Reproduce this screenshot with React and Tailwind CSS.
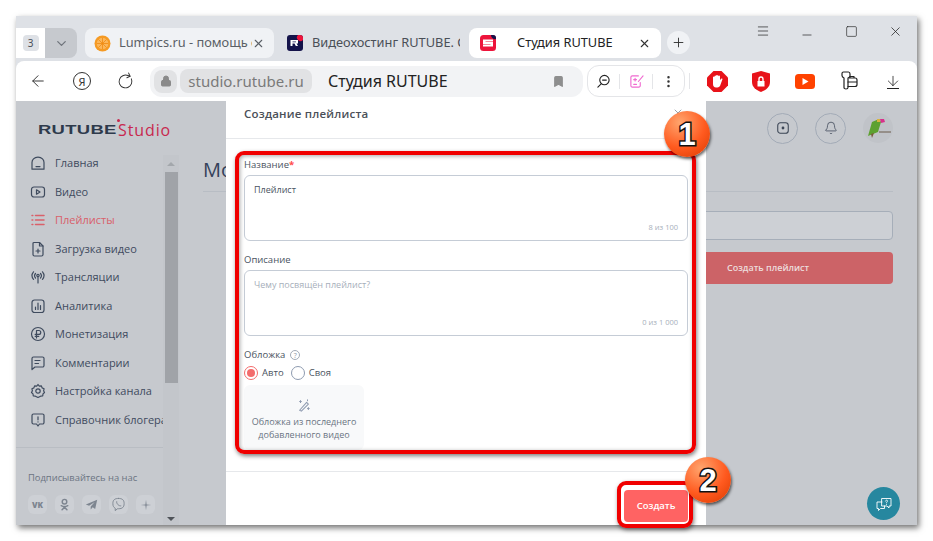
import { X, Plus, ChevronDown, ArrowLeft, RotateCw, Lock, Bookmark, Minus, Square, Menu, EllipsisVertical, ArrowDown, Bell } from 'lucide-react';

const Ico = ({ children, size = 16, className = '', vb = 16, sw = 1.2 }) => (
  <svg width={size} height={size} viewBox={`0 0 ${vb} ${vb}`} fill="none" stroke="currentColor" strokeWidth={sw} strokeLinecap="round" strokeLinejoin="round" className={className}>
    {children}
  </svg>
);

const navItems = [
  { label: 'Главная', icon: <><path d="M2 14.2V7.5C2 5 4 2.200 8 2.200s6 2.800 6 5.300v6.700z" /><path d="M6 11.600h4" /></> },
  { label: 'Видео', icon: <><rect x="1.500" y="3" width="13" height="10" rx="2.500" /><path d="M6.500 5.800v4.400L10 8z" /></> },
  { label: 'Плейлисты', active: true, icon: <path d="M2 3.500h.8M2 8h.8M2 12.500h.8M5.500 3.500H14M5.500 8H14M5.500 12.500H14" strokeWidth="1.500" /> },
  { label: 'Загрузка видео', icon: <><path d="M3 2.500a1 1 0 0 1 1-1h5.500L13 5v8.500a1.500 1.500 0 0 1-1.500 1.500h-7A1.500 1.500 0 0 1 3 13.500z" /><path d="M9.500 1.500V5H13M8 8v4M6 10h4" /></> },
  { label: 'Трансляции', icon: <><circle cx="8" cy="6.500" r="1.200" /><path d="M8 8v6M5.500 4.500a3.500 3.500 0 0 0 0 4.500M10.500 4.500a3.500 3.500 0 0 1 0 4.500M3.500 2.800a6 6 0 0 0 0 7.600M12.500 2.800a6 6 0 0 1 0 7.600" /></> },
  { label: 'Аналитика', icon: <><rect x="2" y="2" width="12" height="12.500" rx="2.500" /><path d="M5.500 11.500V9M8 11.500V5M10.500 11.500V7.500" /></> },
  { label: 'Монетизация', icon: <><circle cx="8" cy="8" r="6.500" /><path d="M6.500 12V4.500h2.300a1.900 1.900 0 0 1 0 3.900H5.200M5.200 10.300h3.600" /></> },
  { label: 'Комментарии', icon: <><path d="M2 3.500A1.500 1.500 0 0 1 3.500 2h9A1.500 1.500 0 0 1 14 3.500v7a1.500 1.500 0 0 1-1.500 1.500H5l-3 2.500z" /><path d="M5 5.500h5M5 8.500h3.500" /></> },
  { label: 'Настройка канала', icon: <><path d="M8 1.500l1.300 1.700 2.100-.3.700 2 2 .8-.5 2.100.9 1.700-1.500 1.400-.3 2.100-2.100.2L8 14.500l-2.600-1.300-2.100-.2-.3-2.100L1.500 9.500l.9-1.700-.5-2.100 2-.8.700-2 2.100.3z" /><circle cx="8" cy="8" r="2.200" /></> },
  { label: 'Справочник блогера', icon: <><path d="M3.500 2h9A1.500 1.500 0 0 1 14 3.500v7a1.500 1.500 0 0 1-1.500 1.500H9.500L8 14l-1.500-2h-3A1.500 1.500 0 0 1 2 10.500v-7A1.500 1.500 0 0 1 3.500 2z" /><path d="M8 4.800v3M8 9.800v.1" /></> },
];

const socials = [
  <span key="vk" className="text-[8px] font-black text-[#7d8590]">VK</span>,
  <Ico key="ok" size={13} sw={1.800} className="text-[#7d8590]"><circle cx="8" cy="4.500" r="2.800" /><path d="M4 9.500c2.500 1.500 5.500 1.500 8 0M8 10.500v1M5 14.500l3-3 3 3" /></Ico>,
  <svg key="tg" width="13" height="13" viewBox="0 0 16 16" className="text-[#7d8590]" fill="currentColor"><path d="M15 2 1 8l4 1.500L12 5 7 10.500V14l2.500-2.500 3 2z" /></svg>,
  <Ico key="vb" size={15} sw={1} className="text-[#7d8590]"><path d="M8 1.500c4 0 6 1.500 6 5.500s-2 5.500-6 5.500H7L4.500 14.500V12C3 11 2 10 2 7c0-4 2-5.500 6-5.500z" /><path d="M6 5c-.500 2 2.500 5 4.500 4.500" /></Ico>,
  <svg key="st" width="12" height="12" viewBox="0 0 16 16" className="text-[#7d8590]" fill="currentColor"><path d="M8 1l.8 6.200L15 8l-6.200.8L8 15l-.8-6.200L1 8l6.200-.8z" /></svg>,
];

const Sidebar = () => (
  <aside className="flex w-[187px] shrink-0 bg-[#c6c9ce]">
    <div className="flex w-[147px] flex-col">
      <div className="flex h-[48px] items-start pt-[20px] pl-[22px]">
        <span className="inline-block w-[80px] shrink-0 origin-left scale-x-[1.42] text-[13px] leading-[18px] font-black tracking-[0.2px] text-[#2e3a4c] [font-family:'Liberation_Sans',sans-serif]">RUTUBE</span>
        <span className="relative shrink-0 text-[16px] leading-[18px] tracking-[0.9px] text-[#c8284e] [font-family:'Open_Sans',sans-serif]">
          <span className="absolute -top-[2px] -left-[1px] h-[3px] w-[3px] rounded-full bg-[#c8284e]" />
          Studio
        </span>
      </div>
      <nav className="flex flex-col pl-[14px]">
        {navItems.map((item) => (
          <div key={item.label} className={`flex h-[28.5px] items-center gap-[9px] overflow-hidden whitespace-nowrap text-[11px] ${item.active ? 'text-[#d9606a]' : 'text-[#3f4b5e]'}`}>
            <Ico size={16} className="shrink-0">{item.icon}</Ico>
            <span>{item.label}</span>
          </div>
        ))}
      </nav>
      <div className="mt-[13px] h-px bg-[#b9bdc3]" />
      <p className="mt-[23px] pl-[12px] text-[9.400px] leading-[13px] text-[#6b7482]">Подписывайтесь на нас</p>
      <div className="mt-[11px] flex gap-[8px] pl-[12px]">
        {socials.map((icon, i) => (
          <div key={i} className="flex h-[19px] w-[19px] items-center justify-center rounded-md bg-[#cdd0d5]">{icon}</div>
        ))}
      </div>
    </div>
    <div className="mt-[54px] flex w-[16px] flex-col items-center bg-[#c3c6cb]">
      <div className="flex h-[17px] w-full items-center justify-center">
        <div className="h-0 w-0 border-x-[4px] border-b-[4px] border-x-transparent border-b-[#a3a7ac]" />
      </div>
      <div className="h-[211px] w-[13px] bg-[#a0a3a8]" />
      <div className="mt-auto mb-[4px] h-0 w-0 border-x-[4px] border-t-[4px] border-x-transparent border-t-[#4f5359]" />
    </div>
    <div className="w-[24px]" />
  </aside>
);

const MainArea = () => (
  <main className="flex min-w-0 flex-1 flex-col bg-[#c6c9ce] pr-[24px]">
    <div className="flex h-[54px] items-center justify-end gap-[17px]">
      <div className="flex h-[31px] w-[31px] items-center justify-center rounded-full border border-[#a3abb7]">
        <Ico size={14} className="text-[#3a4454]"><rect x="2" y="2" width="12" height="12" rx="3" /><circle cx="8" cy="8" r="1" fill="currentColor" /></Ico>
      </div>
      <div className="flex h-[31px] w-[31px] items-center justify-center rounded-full border border-[#a3abb7]">
        <Bell size={14} strokeWidth={1.300} className="text-[#3a4454]" />
      </div>
      <div className="flex h-[30px] w-[30px] items-center justify-center rounded-full bg-[#c0c3c8]">
        <svg width="30" height="30" viewBox="0 0 30 30">
          <path d="M9 9l7-3 2 3-3 10-10 4z" fill="#5da130" />
          <path d="M17 6h4l1 3-4 1z" fill="#d8318b" />
          <path d="M14 6h3v3h-3z" fill="#d9b43c" />
          <path d="M8 21l1 4 2-5z" fill="#7a5b3a" />
          <path d="M16 19h12" stroke="#6b5a4a" strokeWidth="1" />
        </svg>
      </div>
    </div>
    <div className="border-b border-[#b8bdc4] pt-[2px] pb-[8px] text-[20px] leading-[26px] whitespace-nowrap text-[#34415a] [font-family:'Open_Sans',sans-serif]">Мои плейлисты</div>
    <div className="mt-[19px] ml-auto h-[29px] w-[300px] rounded border border-[#a6aeb9] bg-[#cdd0d5]" />
    <div className="mt-[12px] ml-auto flex h-[32px] w-[300px] items-center rounded bg-[#cc6367] pl-[134px] text-[9px] font-semibold text-[#ecdcdc]">Создать плейлист</div>
    <div className="mt-auto mb-[5px] flex justify-end">
      <div className="-mr-[7px] flex h-[33px] w-[33px] items-center justify-center rounded-full bg-[#26879f] text-white">
        <Ico size={20} vb={20} sw={0.900}><path d="M8 4.500h9v7.500h-2v2l-2-2H8z" /><path d="M8 8H3v6.500h1.500v2l2-2h4V12" /><path d="M11.500 7c.2-1.200 2-1.200 2 0 0 .8-1 .8-1 1.800M12.500 10.300v.1" /></Ico>
      </div>
    </div>
  </main>
);

const CreateDialog = () => (
  <div className="absolute top-0 bottom-0 left-[210px] flex w-[480px] flex-col bg-white text-[#4a5361] [font-family:'Open_Sans',sans-serif]">
    <div className="relative h-[38px] border-b border-[#e6e8eb] pt-[4px] pl-[18px] text-[11.500px] leading-[18px] font-semibold tracking-[0.2px] text-[#4a5058]">
      Создание плейлиста
      <X size={12} className="absolute top-[6px] right-[22px] text-[#9aa1ab]" />
    </div>
    <div className="flex flex-1 flex-col px-[18px] pt-[19px]">
      <label className="text-[9.500px] leading-[14px]">Название<span className="font-bold text-[#ff4a4a]">*</span></label>
      <div className="relative mt-[3px] h-[66px] rounded-md border border-[#c5ccd6] pt-[7px] pl-[9px] text-[9px] leading-[13px] text-[#4a5361]">
        Плейлист
        <span className="absolute right-[9px] bottom-[7px] text-[7.500px] leading-[12px] text-[#a7afbb]">8 из 100</span>
      </div>
      <label className="mt-[12px] text-[9.500px] leading-[14px]">Описание</label>
      <div className="relative mt-[3px] h-[66px] rounded-md border border-[#c5ccd6] pt-[7px] pl-[9px] text-[9px] leading-[13px] text-[#a7afbb]">
        Чему посвящён плейлист?
        <span className="absolute right-[9px] bottom-[7px] text-[7.500px] leading-[12px] text-[#a7afbb]">0 из 1 000</span>
      </div>
      <div className="mt-[12px] flex items-center gap-[5px] text-[9.500px] leading-[14px]">
        Обложка
        <span className="flex h-[10px] w-[10px] items-center justify-center rounded-full border border-[#a3abb7] text-[7px] leading-none text-[#8e97a4]">?</span>
      </div>
      <div className="mt-[4px] flex items-center text-[9.500px] leading-[14px]">
        <span className="flex h-[14px] w-[14px] items-center justify-center rounded-full border border-[#f36b6b]">
          <span className="h-[8px] w-[8px] rounded-full bg-[#f36b6b]" />
        </span>
        <span className="ml-[4px]">Авто</span>
        <span className="ml-[7px] h-[14px] w-[14px] rounded-full border border-[#8e9bb0]" />
        <span className="ml-[4px]">Своя</span>
      </div>
      <div className="mt-[5px] flex h-[65px] w-[120px] flex-col items-center rounded-md bg-[#f8f9fa] pt-[13px] text-center text-[9px] leading-[13px] text-[#6a7482]">
        <Ico size={14} className="mb-[3px] text-[#8e9bb0]" vb={16}><path d="M3 14L11 5l2 2-8 8z" /><path d="M4 3v2M3 4h2M13 11v2M12 12h2M12 2v1" /></Ico>
        <span>Обложка из последнего<br />добавленного видео</span>
      </div>
    </div>
    <div className="flex h-[54px] justify-end border-t border-[#e6e8eb] pt-[18px] pr-[18px]">
      <button className="h-[32px] w-[64px] rounded bg-[#ff6363] text-[9.500px] font-semibold text-white">Создать</button>
    </div>
  </div>
);

const NumberBadge = ({ n, className }) => (
  <div className={`absolute flex h-[46px] w-[46px] items-center justify-center rounded-full bg-[radial-gradient(circle_at_35%_25%,#ffa56e,#ff5a1f_55%,#d93a00)] shadow-[1px_2px_3px_rgba(0,0,0,0.6)] ${className}`}>
    <span className="text-[31px] leading-none font-bold text-white [font-family:'Liberation_Sans',sans-serif] [-webkit-text-stroke:3px_#111] [paint-order:stroke_fill]">{n}</span>
  </div>
);

const TabStrip = () => (
  <div className="flex h-[45px] shrink-0 bg-[#dee1e6] pt-[12px] [font-family:'Noto_Sans',sans-serif]">
    <div className="flex h-[30px] w-[61px] overflow-hidden rounded-r-lg">
      <div className="flex w-[29px] items-center justify-center bg-white">
        <span className="flex h-[16px] w-[16px] items-center justify-center rounded bg-[#dee1e6] text-[10px] text-[#4a4f57]">3</span>
      </div>
      <div className="flex flex-1 items-center justify-center bg-[#c6c9ce] text-[#6f747b]"><ChevronDown size={15} /></div>
    </div>
    <div className="ml-[8px] flex h-[30px] w-[189px] items-center rounded-lg bg-[#f0f2f5] pl-[9px] text-[12.800px] text-[#5a5f66]">
      <svg width="17" height="17" viewBox="0 0 17 17" className="shrink-0">
        <circle cx="8.500" cy="8.500" r="8" fill="#f59a23" />
        <circle cx="8.500" cy="8.500" r="5.800" fill="#fbb65a" />
        <path d="M8.500 2.700v11.600M2.700 8.500h11.600M4.400 4.400l8.200 8.200M12.600 4.400l-8.200 8.200" stroke="#f08a10" strokeWidth="0.800" />
      </svg>
      <span className="ml-[8px] w-[133px] overflow-hidden whitespace-nowrap">Lumpics.ru - помощь с</span>
      <X size={13} />
    </div>
    <div className="flex h-[30px] w-[195px] items-center pl-[13px] text-[12.800px] text-[#4a4f57]">
      <svg width="16" height="16" viewBox="0 0 16 16" className="shrink-0">
        <rect width="16" height="16" rx="3" fill="#14134a" />
        <path d="M11 0h2a3 3 0 0 1 3 3v2a3 3 0 0 1-5-5z" fill="#ed143b" />
        <path d="M3.500 5h7.500v3.500H9.500L11 11H8.800L7.500 8.500H5.500V11h-2zM5.500 6.500v.7h3.500v-.7z" fill="#fff" />
      </svg>
      <span className="ml-[9px] w-[148px] overflow-hidden whitespace-nowrap">Видеохостинг RUTUBE. С</span>
    </div>
    <div className="flex h-[30px] w-[192px] items-center rounded-lg bg-white pl-[11px] text-[12.800px] text-[#222]">
      <svg width="16" height="16" viewBox="0 0 16 16" className="shrink-0">
        <rect width="16" height="16" rx="3.500" fill="#ed143b" />
        <path d="M11 0h2a3 3 0 0 1 3 3v1a4 4 0 0 1-5-4z" fill="#14134a" />
        <path d="M3 4.500h10v2H5.500v.5H13v4.500H3v-2h7.500V9H3z" fill="#fff" />
      </svg>
      <span className="ml-[21px] w-[120px] whitespace-nowrap">Студия RUTUBE</span>
      <X size={13} className="ml-[1px] text-[#333]" />
    </div>
    <div className="ml-[6px] flex h-[23px] w-[23px] translate-y-[3px] items-center justify-center rounded-full bg-[#f0f2f5] text-[#333]"><Plus size={15} strokeWidth={1.500} /></div>
    <div className="-mt-[12px] ml-auto flex h-[30px] items-center text-[#222]">
      <span className="flex w-[44px] justify-center"><Menu size={14} strokeWidth={1.200} /></span>
      <span className="flex w-[44px] justify-center"><Minus size={14} strokeWidth={1.200} className="translate-y-[4px]" /></span>
      <span className="flex w-[44px] justify-center"><Square size={13} strokeWidth={1.200} /></span>
      <span className="flex w-[44px] justify-center"><X size={15} strokeWidth={1.200} /></span>
    </div>
  </div>
);

const Toolbar = () => (
  <div className="flex h-[40px] shrink-0 items-center rounded-t-lg bg-white pr-[1px] [font-family:'Noto_Sans',sans-serif]">
    <span className="flex w-[44px] justify-center text-[#333]"><ArrowLeft size={18} strokeWidth={1.300} /></span>
    <span className="flex w-[44px] justify-center">
      <span className="flex h-[18px] w-[18px] items-center justify-center rounded-full border border-[#333] text-[11px] leading-none text-[#333]">Я</span>
    </span>
    <span className="flex w-[46px] justify-start pl-[13px] text-[#333]"><RotateCw size={17} strokeWidth={1.300} className="rotate-[-25deg]" /></span>
    <div className="flex h-[31px] w-[433px] shrink-0 items-center rounded-xl bg-[#f2f3f5] pl-[4px]">
      <span className="flex h-[23px] w-[23px] items-center justify-center rounded-lg bg-[#e1e2e4] text-[#8a8a8a]"><Lock size={12} fill="currentColor" /></span>
      <span className="ml-[3px] flex h-[24px] w-[132px] items-center justify-center rounded-lg bg-[#e1e2e4] text-[15px] text-[#7a7a7a]">studio.rutube.ru</span>
      <span className="ml-[16px] text-[16px] text-[#222]">Студия RUTUBE</span>
      <Bookmark size={13} fill="#8e8e8e" stroke="#8e8e8e" className="mr-[18px] ml-auto" />
    </div>
    <div className="ml-[4px] flex h-[32px] w-[98px] shrink-0 items-center rounded-xl border border-[#e4e5e8]">
      <span className="flex w-[32px] justify-center border-r border-[#e4e5e8] text-[#222]">
        <Ico size={15}><circle cx="9" cy="6.500" r="5" /><path d="M5.500 10.500L2 14M7 6.500h4" /></Ico>
      </span>
      <span className="flex w-[33px] justify-center border-r border-[#e4e5e8] text-[#f06ad0]">
        <Ico size={15}><path d="M12 9v3.500a1.500 1.500 0 0 1-1.500 1.500h-7A1.500 1.500 0 0 1 2 12.500v-9A1.500 1.500 0 0 1 3.500 2H10M15 2l-5 6M5 6h3M6.500 4.500v3M5 11h3" /></Ico>
      </span>
      <span className="flex w-[31px] justify-center text-[#333]"><EllipsisVertical size={15} strokeWidth={2} /></span>
    </div>
    <div className="ml-[4px] h-[16px] w-px bg-[#e4e5e8]" />
    <div className="ml-[5px] flex flex-1 items-center">
      <span className="flex w-[44px] justify-center">
        <svg width="21" height="21" viewBox="0 0 21 21">
          <path d="M6.500 0h8L21 6.500v8L14.500 21h-8L0 14.500v-8z" fill="#e8131a" />
          <path d="M6 9.500V6a1 1 0 0 1 1.500 0v-1a1 1 0 0 1 1.500 0 1 1 0 0 1 2 0v.5a1 1 0 0 1 2 0V9l1-1c1-1 1.800 0 1.300.8L13 15a3 3 0 0 1-2.500 1.500H9C7 16.500 6 15 6 13z" fill="#fff" />
        </svg>
      </span>
      <span className="flex w-[44px] justify-center">
        <svg width="18" height="21" viewBox="0 0 18 21">
          <path d="M9 0l9 2.500V11c0 5-4 8-9 10-5-2-9-5-9-10V2.500z" fill="#e8131a" />
          <path d="M7 10V8a2 2 0 0 1 4 0v2" fill="none" stroke="#fff" strokeWidth="1.400" />
          <rect x="5.500" y="10" width="7" height="5.500" fill="#fff" />
        </svg>
      </span>
      <span className="flex w-[44px] justify-center">
        <svg width="20" height="15" viewBox="0 0 20 15">
          <rect width="20" height="15" rx="3.500" fill="#ff4200" />
          <path d="M7.500 4l6 3.500-6 3.500z" fill="#fff" />
        </svg>
      </span>
      <span className="flex w-[44px] justify-center text-[#222]">
        <Ico size={20} vb={20}><path d="M3 2.500c0-.8.700-1.500 1.500-1.500h5C10.500 1 11 2 11 3v2c0 1-1 1.500-2 2v9.500c0 1-1 1.500-2 1.500s-2-.500-2-1.500V7C4 6.500 3 5.500 3 4.500z" /><path d="M10 7h6a2 2 0 0 1 2 2v4.500a2 2 0 0 1-2 2H9M11 7V5.500h4V7M9 11h9" /></Ico>
      </span>
      <span className="flex w-[44px] flex-col items-center text-[#222]">
        <ArrowDown size={16} strokeWidth={1.200} />
        <span className="-mt-[1px] h-px w-[12px] bg-[#222]" />
      </span>
    </div>
  </div>
);

export default function App() {
  return (
    <div className="h-[541px] w-[933px] overflow-hidden bg-white pt-[16px] pl-[16px]">
      <div className="relative flex h-[509px] w-[901px] flex-col bg-[#dee1e6] shadow-[2px_3px_6px_rgba(0,0,0,0.55)]">
        <TabStrip />
        <Toolbar />
        <div className="relative flex min-h-0 flex-1 [font-family:'Open_Sans',sans-serif]">
          <Sidebar />
          <MainArea />
          <CreateDialog />
        </div>

        {/* red marks drawn over the shot */}
        <div className="pointer-events-none absolute top-[135px] left-[219px] h-[303px] w-[461px] rounded-[9px] border-[4px] border-[#f00000] shadow-[1px_2px_4px_rgba(0,0,0,0.5),inset_1px_1px_4px_rgba(0,0,0,0.35)]" />
        <div className="pointer-events-none absolute top-[465px] left-[601px] h-[47px] w-[76px] rounded-[9px] border-[4px] border-[#f00000] shadow-[1px_2px_4px_rgba(0,0,0,0.5)]" />
        <NumberBadge n="1" className="top-[95px] left-[648px]" />
        <NumberBadge n="2" className="top-[441px] left-[669px]" />
      </div>
    </div>
  );
}
